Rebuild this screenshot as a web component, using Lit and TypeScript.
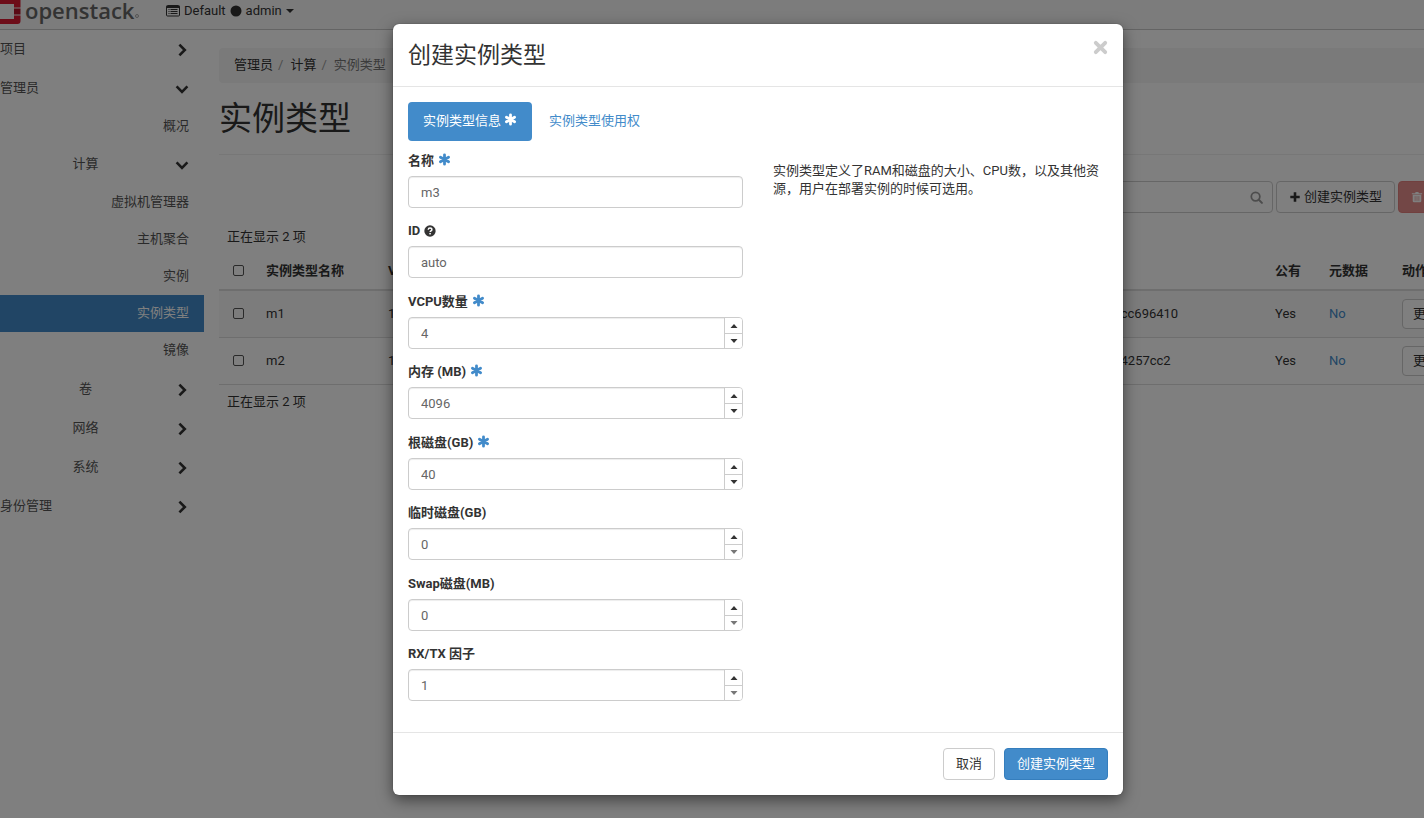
import { LitElement, html, css, svg, nothing } from "lit";
import { customElement, property } from "lit/decorators.js";

const ICONS: Record<string, { box: string; body: unknown }> = {
  right: { box: "0 0 14 14", body: svg`<path d="M4.4 1.6 9.8 7l-5.4 5.4" fill="none" stroke="currentColor" stroke-width="2.6"/>` },
  down: { box: "0 0 14 14", body: svg`<path d="M1.6 4.4 7 9.8l5.4-5.4" fill="none" stroke="currentColor" stroke-width="2.6"/>` },
  asterisk: { box: "0 0 14 14", body: svg`<path d="M7 2v10M2.6 4.5l8.8 5M11.4 4.5l-8.8 5" fill="none" stroke="currentColor" stroke-width="3" stroke-linecap="round"/>` },
  help: { box: "0 0 14 14", body: svg`<circle cx="7" cy="7" r="6.6" fill="currentColor"/><path d="M4.9 5.5C5 4.2 5.900 3.600 7 3.600c1.200 0 2.200.7 2.200 1.800 0 1.500-2 1.500-2 2.900" fill="none" stroke="#fff" stroke-width="1.700"/><rect x="6.200" y="9.300" width="1.800" height="1.700" fill="#fff"/>` },
  times: { box: "0 0 14 14", body: svg`<path d="M2.600 2.600l8.800 8.800M11.400 2.600l-8.800 8.800" fill="none" stroke="currentColor" stroke-width="3.600" stroke-linecap="round"/>` },
  plus: { box: "0 0 14 14", body: svg`<path d="M7 1.500v11M1.500 7h11" fill="none" stroke="currentColor" stroke-width="3"/>` },
  magnifier: { box: "0 0 14 14", body: svg`<circle cx="6" cy="6" r="4.600" fill="none" stroke="currentColor" stroke-width="1.900"/><path d="M9.500 9.500l3.300 3.300" stroke="currentColor" stroke-width="2.200" stroke-linecap="round"/>` },
  trash: { box: "0 0 14 14", body: svg`<path d="M1 2.500h3.800l.6-1.400h3.200l.6 1.400H13v1.200H1zM2 4.400h10v7.200q0 1.600-1.500 1.600h-7Q2 13.200 2 11.600z" fill="currentColor"/><path d="M4.800 6v5.500M7 6v5.500M9.200 6v5.500" stroke="#d9534f" stroke-width=".8"/>` },
  list: { box: "0 0 14 14", body: svg`<path d="M1.500 1.500h11q1 0 1 1v8.500q0 1-1 1h-11q-1 0-1-1V2.500q0-1 1-1z" fill="none" stroke="currentColor"/><path d="M.5 3h13" stroke="currentColor" stroke-width="2"/><path d="M2.500 5.500h1M4.500 5.500h7M2.500 7.500h1M4.500 7.500h7M2.500 9.500h1M4.500 9.500h7" stroke="currentColor"/>` },
  dot: { box: "0 0 14 14", body: svg`<circle cx="7" cy="7" r="6.400" fill="currentColor"/>` },
  caret: { box: "0 0 8 8", body: svg`<path d="M0 2h8L4 6z" fill="currentColor"/>` },
  spinUp: { box: "0 0 8 8", body: svg`<path d="M.5 6h7L4 2z" fill="currentColor"/>` },
  spinDown: { box: "0 0 8 8", body: svg`<path d="M.5 2h7L4 6z" fill="currentColor"/>` },
};

const icon = (name: string) =>
  html`<svg class="icon ${name}" viewBox=${ICONS[name].box} aria-hidden="true">${ICONS[name].body}</svg>`;

const base = css`
  * { box-sizing: border-box; }
  :host {
    font: 13px/18px Roboto, "Noto Sans CJK SC", sans-serif;
    color: #333;
  }
  button, input { font: inherit; color: inherit; margin: 0; }
  button { cursor: pointer; }
  a { color: #428bca; text-decoration: none; }
  .icon { width: 12px; height: 12px; flex: none; display: inline-block; }
  .btn {
    display: inline-flex; align-items: center; justify-content: center; gap: 3px;
    height: 32px; padding: 0 12px; border: 1px solid #ccc; border-radius: 4px;
    background: #fff; white-space: nowrap;
  }
  .btn.primary { background: #428bca; border-color: #357ebd; color: #fff; }
  .btn.danger { background: #d9534f; border-color: #d43f3a; color: #fff; opacity: 0.65; }
`;

@customElement("top-bar")
class TopBar extends LitElement {
  static styles = [base, css`
    :host { display: block; background: #f8f8f8; border-bottom: 1px solid #c8c8c8; }
    .bar { display: flex; height: 29px; }
    .brand { display: flex; width: 166px; color: #666; }
    .mark { width: 21px; height: 24px; flex: none; }
    .word { font: 600 22px/20px "Open Sans", sans-serif; padding-left: 4px; }
    .reg { width: 4px; height: 4px; margin: 14px 0 0 1px; border: 1px solid #aaa; border-radius: 50%; }
    .context { display: flex; align-items: center; gap: 4px; height: 22px; padding: 0; border: 0; background: none; }
    .list { width: 14px; height: 14px; }
    .caret { width: 8px; height: 8px; }
  `];
  render() {
    return html`<header class="bar">
      <a class="brand" href="#">
        <svg class="mark" viewBox="0 0 21 24" aria-hidden="true">
          <path d="M0 0h20.500v7.500H14V4H0zM0 19h14v-3.500h6.500V21q0 3-3 3H0z" fill="#da1a32"/>
          <path d="M14 8.500h6.500v6H14z" fill="#b5152b"/>
        </svg>
        <span class="word">openstack</span><span class="reg"></span>
      </a>
      <button class="context">${icon("list")}<span>Default</span>${icon("dot")}<span>admin</span>${icon("caret")}</button>
    </header>`;
  }
}

@customElement("side-nav")
class SideNav extends LitElement {
  static styles = [base, css`
    :host { display: block; width: 204px; flex: none; }
    .head {
      display: flex; align-items: center; width: 100%; height: 39px; padding: 0 15px 0 0;
      border: 0; background: none; color: #555; text-align: left;
    }
    .label { flex: 1; padding-bottom: 2px; }
    .group .label { text-align: center; padding-right: 4px; }
    .head .icon { width: 14px; height: 14px; color: #333; }
    .panels { padding-bottom: 1px; }
    .panel {
      display: flex; align-items: center; justify-content: flex-end; height: 37px;
      padding: 0 15px 1px 0; color: #555;
    }
    .panel.active { background: #428bca; color: #fff; }
  `];
  head(label: string, open = false, group = false) {
    return html`<button class="head ${group ? "group" : ""}" aria-expanded=${open}>
      <span class="label">${label}</span>${icon(open ? "down" : "right")}
    </button>`;
  }
  panel(label: string, active = false) {
    return html`<a class="panel ${active ? "active" : ""}" href="#">${label}</a>`;
  }
  render() {
    return html`<nav>
      ${this.head("项目")}
      ${this.head("管理员", true)}
      ${this.panel("概况")}
      ${this.head("计算", true, true)}
      <div class="panels">
        ${["虚拟机管理器", "主机聚合", "实例", "实例类型", "镜像"].map((p) => this.panel(p, p === "实例类型"))}
      </div>
      ${["卷", "网络", "系统"].map((g) => this.head(g, false, true))}
      ${this.head("身份管理")}
    </nav>`;
  }
}

interface Flavor { name: string; id: string; }
const FLAVORS: Flavor[] = [
  { name: "m1", id: "0b3d52a6-6c1e-4d0a-9a55-72e0cc696410" },
  { name: "m2", id: "5a2f81d4-783b-4e9f-8b16-f09c64257cc2" },
];

@customElement("flavor-page")
class FlavorPage extends LitElement {
  static styles = [base, css`
    :host { display: block; flex: 1; min-width: 0; padding: 18px 15px 0; }
    .crumbs { display: flex; gap: 5px; margin: 0; padding: 8px 15px 9px; list-style: none; background: #f5f5f5; border-radius: 4px; color: #777; }
    .crumbs li { display: flex; gap: 6px; }
    .crumbs li + li::before { content: "/"; color: #999; padding-right: 1px; }
    .crumbs a { color: #333; }
    h1 { font-size: 33px; line-height: 36px; font-weight: 400; margin: 0; padding: 18px 0 17px; border-bottom: 1px solid #eee; }
    .tools { display: flex; justify-content: flex-end; gap: 3px; padding: 26px 0 15px; }
    .search { display: flex; align-items: center; width: 240px; height: 32px; padding: 0 9px; border: 1px solid #ccc; border-radius: 4px; background: #fff; color: #999; }
    .search input { flex: 1; min-width: 0; border: 0; outline: 0; background: none; }
    .magnifier { width: 13px; height: 13px; }
    .count { padding: 0 8px; }
    table { width: 100%; table-layout: fixed; border-collapse: collapse; }
    th, td { padding: 0 8px; text-align: left; white-space: nowrap; }
    th { height: 44px; border-bottom: 2px solid #ddd; font-weight: 700; padding-top: 6px; }
    td { height: 47px; border-bottom: 1px solid #ddd; }
    tbody tr:first-child td { background: #f9f9f9; }
    input[type="checkbox"] { display: block; appearance: none; width: 11px; height: 11px; margin: 0 auto; border: 1px solid #555; border-radius: 2px; }
    td .btn { height: 30px; padding: 0 10px; }
    .after { padding: 8px; }
    .c-check { width: 39px; } .c-name { width: 122px; } .c-num { width: 90px; }
    .c-id { width: 342px; } .c-public { width: 54px; } .c-meta { width: 73px; } .c-act { width: 123px; }
  `];
  render() {
    return html`<main>
      <ol class="crumbs"><li><a href="#">管理员</a></li><li><a href="#">计算</a></li><li>实例类型</li></ol>
      <h1>实例类型</h1>
      <div class="tools">
        <label class="search"><input type="search" aria-label="过滤" />${icon("magnifier")}</label>
        <button class="btn">${icon("plus")}创建实例类型</button>
        <button class="btn danger">${icon("trash")}删除实例类型</button>
      </div>
      <div class="count">正在显示 2 项</div>
      <table>
        <colgroup>
          <col class="c-check" /><col class="c-name" /><col class="c-num" /><col class="c-num" /><col />
          <col class="c-id" /><col class="c-public" /><col class="c-meta" /><col class="c-act" />
        </colgroup>
        <thead><tr>
          <th><input type="checkbox" aria-label="全选" /></th><th>实例类型名称</th><th>VCPU数量</th><th>内存</th><th>根磁盘</th>
          <th>ID</th><th>公有</th><th>元数据</th><th>动作</th>
        </tr></thead>
        <tbody>${FLAVORS.map((f) => html`<tr>
          <td><input type="checkbox" aria-label=${f.name} /></td><td>${f.name}</td><td>1</td><td>1GB</td><td>10GB</td>
          <td>${f.id}</td><td>Yes</td><td><a href="#">No</a></td><td><button class="btn">更新元数据</button></td>
        </tr>`)}</tbody>
      </table>
      <div class="after">正在显示 2 项</div>
    </main>`;
  }
}

@customElement("form-field")
class FormField extends LitElement {
  @property() label = "";
  @property() value = "";
  @property({ type: Boolean }) required = false;
  @property({ type: Boolean }) help = false;
  @property({ type: Boolean }) numeric = false;
  @property({ type: Boolean }) floor = false;
  static styles = [base, css`
    :host { display: block; }
    label { display: flex; align-items: center; gap: 4px; height: 18px; margin-bottom: 6px; font-weight: 700; }
    .asterisk { width: 13px; height: 13px; color: #428bca; margin-bottom: 3px; }
    .box { display: flex; height: 32px; border: 1px solid #ccc; border-radius: 4px; background: #fff; box-shadow: inset 0 1px 1px rgba(0, 0, 0, 0.075); overflow: hidden; }
    input { flex: 1; min-width: 0; padding: 2px 12px 0; border: 0; outline: 0; background: none; color: #666; }
    .spin { display: grid; grid-template-rows: 1fr 1fr; width: 18px; border-left: 1px solid #ccc; background: #fff; }
    .spin button { display: flex; align-items: center; justify-content: center; padding: 0; border: 0; background: none; }
    .spin button + button { border-top: 1px solid #ccc; }
    .spin button:disabled { color: #777; }
    .spin .icon { width: 8px; height: 8px; }
  `];
  render() {
    return html`<label for="field"><span>${this.label}</span>${this.required ? icon("asterisk") : nothing}${this.help ? icon("help") : nothing}</label>
      <div class="box">
        <input id="field" type="text" inputmode=${this.numeric ? "numeric" : "text"} .value=${this.value} />
        ${this.numeric ? html`<div class="spin">
          <button aria-label="增加">${icon("spinUp")}</button>
          <button aria-label="减少" ?disabled=${this.floor}>${icon("spinDown")}</button>
        </div>` : nothing}
      </div>`;
  }
}

@customElement("flavor-dialog")
class FlavorDialog extends LitElement {
  static styles = [base, css`
    :host { display: block; width: 730px; max-width: 90%; background: #fff; border-radius: 6px; box-shadow: 0 5px 15px rgba(0, 0, 0, 0.5), 0 0 1px rgba(0, 0, 0, 0.6); }
    .head { display: flex; justify-content: space-between; align-items: flex-start; padding: 16px 15px 14px; border-bottom: 1px solid #e5e5e5; }
    h2 { font-size: 23px; line-height: 32px; font-weight: 400; margin: 0; }
    .close { display: flex; padding: 0; border: 0; background: none; color: #ccc; }
    .close .icon { width: 15px; height: 15px; }
    .body { padding: 15px 15px 16px; }
    .tabs { display: flex; gap: 2px; margin-bottom: 11px; }
    .tab { display: flex; align-items: center; gap: 3px; height: 39px; padding: 0 15px 2px; border-radius: 4px; }
    .tab.active { background: #428bca; color: #fff; }
    .tab .icon { width: 13px; height: 13px; margin-bottom: 3px; }
    .columns { display: grid; grid-template-columns: 1fr 1fr; gap: 30px; }
    form-field { margin-bottom: 14px; }
    form-field:nth-child(even) { margin-bottom: 15px; }
    .about { margin: 10px 0 0; }
    .foot { display: flex; justify-content: flex-end; gap: 9px; padding: 15px; border-top: 1px solid #e5e5e5; }
  `];
  render() {
    return html`<section role="dialog" aria-label="创建实例类型">
      <div class="head"><h2>创建实例类型</h2><button class="close" aria-label="关闭">${icon("times")}</button></div>
      <div class="body">
        <div class="tabs">
          <a class="tab active" href="#">实例类型信息${icon("asterisk")}</a>
          <a class="tab" href="#">实例类型使用权</a>
        </div>
        <div class="columns">
          <form>
            <form-field label="名称" value="m3" required></form-field>
            <form-field label="ID" value="auto" help></form-field>
            <form-field label="VCPU数量" value="4" required numeric></form-field>
            <form-field label="内存 (MB)" value="4096" required numeric></form-field>
            <form-field label="根磁盘(GB)" value="40" required numeric></form-field>
            <form-field label="临时磁盘(GB)" value="0" numeric floor></form-field>
            <form-field label="Swap磁盘(MB)" value="0" numeric floor></form-field>
            <form-field label="RX/TX 因子" value="1" numeric floor></form-field>
          </form>
          <p class="about">实例类型定义了RAM和磁盘的大小、CPU数，以及其他资源，用户在部署实例的时候可选用。</p>
        </div>
      </div>
      <div class="foot"><button class="btn">取消</button><button class="btn primary">创建实例类型</button></div>
    </section>`;
  }
}

@customElement("app-root")
class AppRoot extends LitElement {
  static styles = [base, css`
    :host { display: block; position: relative; min-height: 100vh; overflow: hidden; background: #fff; }
    .page { display: flex; width: calc(100% + 108px); }
    .backdrop { position: absolute; inset: 0 -92px 0 0; display: flex; justify-content: center; align-items: flex-start; padding-top: 24px; background: rgba(0, 0, 0, 0.5); }
  `];
  render() {
    return html`<top-bar></top-bar>
      <div class="page"><side-nav></side-nav><flavor-page></flavor-page></div>
      <div class="backdrop"><flavor-dialog></flavor-dialog></div>`;
  }
}
